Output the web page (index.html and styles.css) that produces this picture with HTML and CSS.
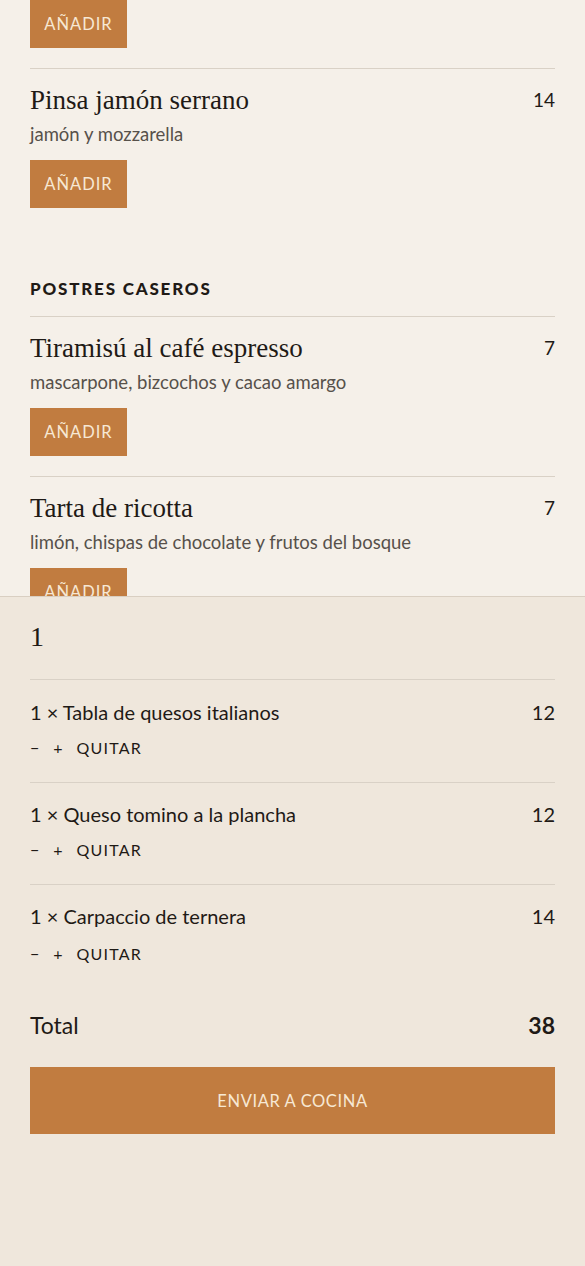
FILE: index.html
```html
<!DOCTYPE html>
<html lang="es">
<head>
<meta charset="utf-8">
<title>Carta</title>
<link rel="stylesheet" href="styles.css">
</head>
<body>
<main class="menu">
  <section class="section section-first">
    <div class="item item-top">
      <button class="add">AÑADIR</button>
    </div>
    <div class="item">
      <div class="item-head"><h3 class="dish">Pinsa jamón serrano</h3><span class="price">14</span></div>
      <p class="desc">jamón y mozzarella</p>
      <button class="add">AÑADIR</button>
    </div>
  </section>

  <section class="section">
    <h2 class="section-title">POSTRES CASEROS</h2>
    <div class="item">
      <div class="item-head"><h3 class="dish">Tiramisú al café espresso</h3><span class="price">7</span></div>
      <p class="desc">mascarpone, bizcochos y cacao amargo</p>
      <button class="add">AÑADIR</button>
    </div>
    <div class="item">
      <div class="item-head"><h3 class="dish">Tarta de ricotta</h3><span class="price">7</span></div>
      <p class="desc">limón, chispas de chocolate y frutos del bosque</p>
      <button class="add">AÑADIR</button>
    </div>
  </section>
</main>

<aside class="cart">
  <h2 class="cart-count">1</h2>
  <ul class="cart-list">
    <li class="cart-item">
      <div class="cart-row"><span>1 × Tabla de quesos italianos</span><span>12</span></div>
      <div class="controls"><button class="ctl">−</button><button class="ctl">+</button><button class="ctl remove">QUITAR</button></div>
    </li>
    <li class="cart-item">
      <div class="cart-row"><span>1 × Queso tomino a la plancha</span><span>12</span></div>
      <div class="controls"><button class="ctl">−</button><button class="ctl">+</button><button class="ctl remove">QUITAR</button></div>
    </li>
    <li class="cart-item">
      <div class="cart-row"><span>1 × Carpaccio de ternera</span><span>14</span></div>
      <div class="controls"><button class="ctl">−</button><button class="ctl">+</button><button class="ctl remove">QUITAR</button></div>
    </li>
  </ul>
  <div class="total"><span>Total</span><strong>38</strong></div>
  <button class="send">ENVIAR A COCINA</button>
</aside>
</body>
</html>
```

FILE: styles.css
```css
* { box-sizing: border-box; }
html, body { margin: 0; padding: 0; }
body {
  background: #f5f0e9;
  color: #1f1a16;
  font-family: "Source Sans Pro", Lato, "Noto Sans", sans-serif;
  width: 585px;
  height: 1266px;
  overflow: hidden;
}
.menu { padding: 0 30px; }
.item {
  border-bottom: 1px solid #d9d1c6;
  padding: 15px 0 20px;
}
.item:last-child { border-bottom: 0; }
.item-top { padding-top: 0; }
.item-head {
  display: flex;
  justify-content: space-between;
  align-items: center;
}
.dish {
  margin: 0;
  font-family: "Liberation Serif", serif;
  font-weight: 400;
  font-size: 27px;
  line-height: 32px;
  color: #1f1a16;
}
.price { font-size: 19px; line-height: 32px; }
.desc {
  margin: 6px 0 14px;
  font-size: 18.5px;
  line-height: 24px;
  color: #57514b;
}
.add {
  display: block;
  width: 97px;
  height: 48px;
  border: 0;
  padding: 0;
  background: #c17c40;
  color: #f7e8d4;
  font-family: inherit;
  font-size: 16.5px;
  letter-spacing: 1px;
}
.section { padding-top: 48px; }
.section-first { padding-top: 0; }
.section-title {
  margin: 0;
  padding-bottom: 14px;
  border-bottom: 1px solid #d9d1c6;
  font-size: 17px;
  font-weight: 900;
  letter-spacing: 1.8px;
  line-height: 26px;
}

.cart {
  position: fixed;
  left: 0;
  right: 0;
  bottom: 0;
  height: 670px;
  background: #efe7dc;
  border-top: 1px solid #d9cfc2;
  padding: 20px 30px 0;
}
.cart-count {
  margin: 0;
  font-family: "Liberation Serif", serif;
  font-weight: 400;
  font-size: 28px;
  line-height: 40px;
  padding-bottom: 22px;
  border-bottom: 1px solid #d9d1c6;
}
.cart-list { list-style: none; margin: 0; padding: 0; }
.cart-item {
  border-bottom: 1px solid #d9d1c6;
  padding: 17px 0 21px;
}
.cart-item:first-child { padding-top: 18px; }
.cart-item:last-child { border-bottom: 0; }
.cart-row {
  display: flex;
  justify-content: space-between;
  font-size: 20px;
  line-height: 28px;
}
.controls { display: flex; gap: 14px; margin-top: 9px; }
.cart-item:last-child .controls { margin-top: 11px; }
.ctl {
  border: 0;
  background: none;
  padding: 0;
  font-family: inherit;
  font-size: 16px;
  line-height: 26px;
  color: #1f1a16;
}
.remove { letter-spacing: 1.2px; }
.total {
  display: flex;
  justify-content: space-between;
  align-items: center;
  font-size: 23px;
  line-height: 30px;
  margin-top: 22px;
}
.total strong { font-weight: 700; }
.send {
  display: block;
  width: 100%;
  height: 67px;
  margin-top: 27px;
  border: 0;
  background: #c17c40;
  color: #f7e8d4;
  font-family: inherit;
  font-size: 16.5px;
  letter-spacing: 0.6px;
}
```
